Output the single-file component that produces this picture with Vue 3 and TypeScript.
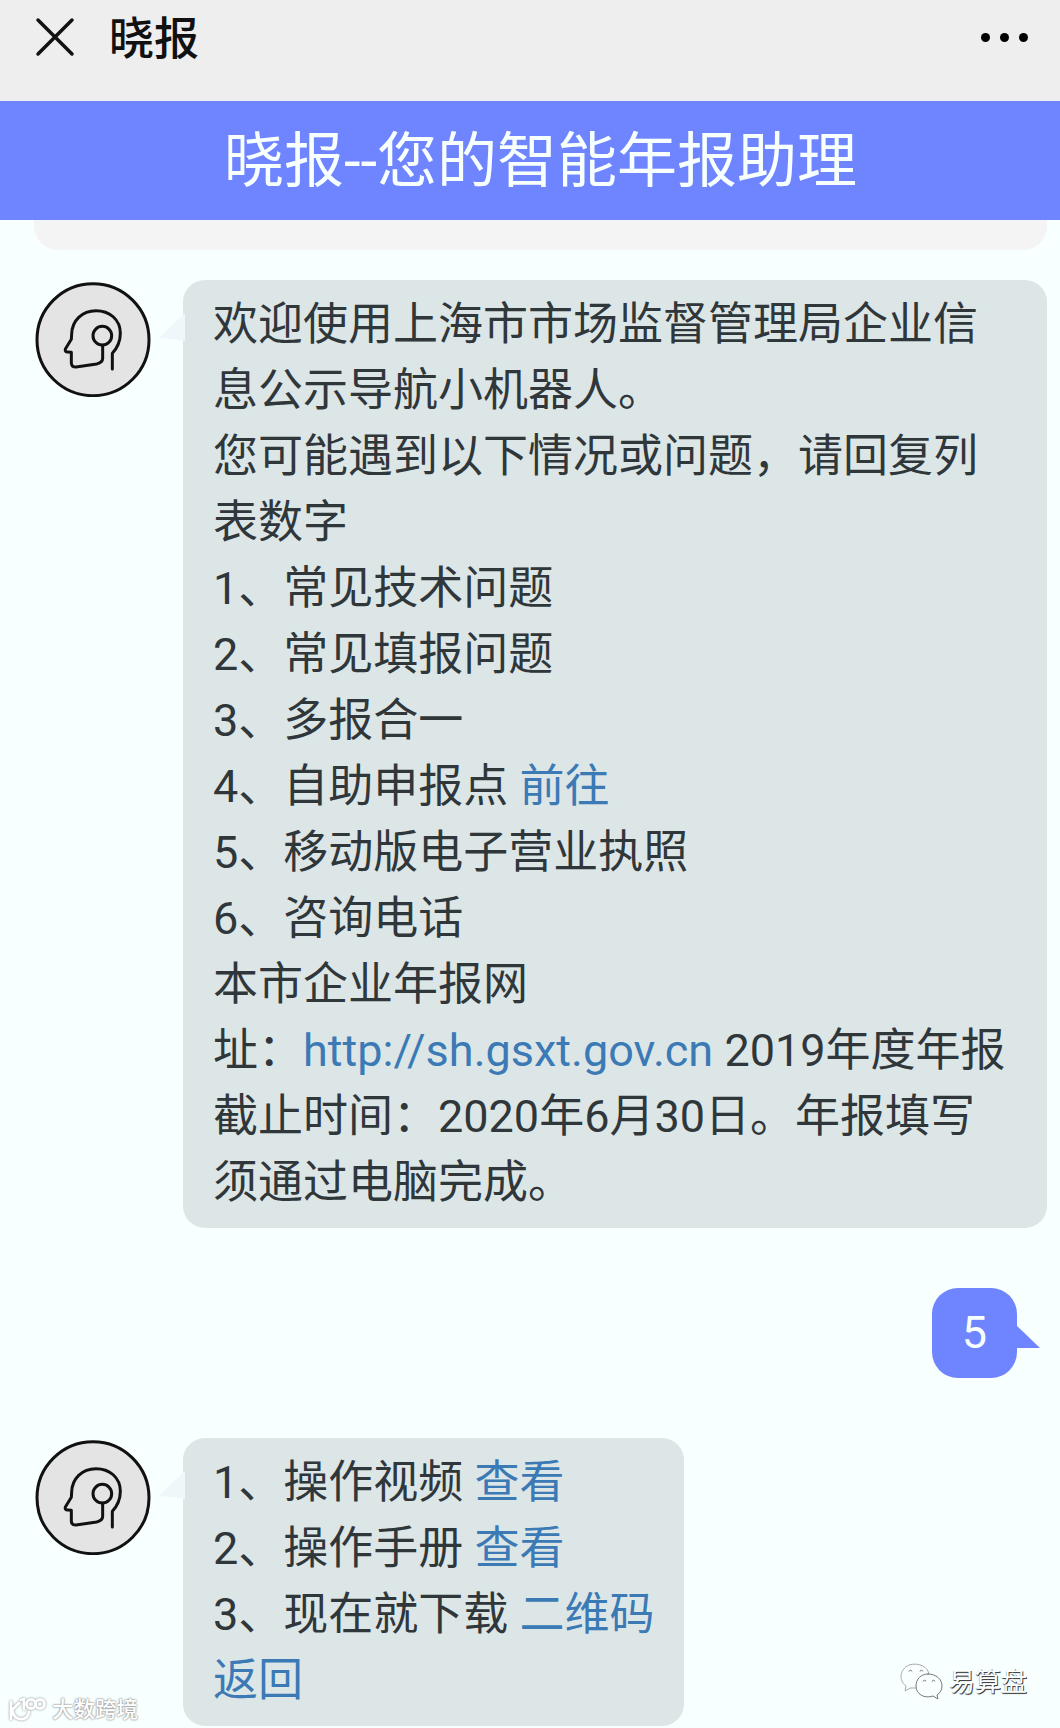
<template>
  <div class="page">
    <header class="nav-bar">
      <svg class="close" viewBox="0 0 40 40">
        <path d="M3 3L37 37M37 3L3 37" />
      </svg>
      <span class="nav-title">晓报</span>
      <div class="more"><i></i><i></i><i></i></div>
    </header>
    <h1 class="banner">晓报--您的智能年报助理</h1>
    <main class="chat">
      <div class="previous"></div>
      <div
        v-for="message in messages"
        :key="message.id"
        class="message"
        :class="[message.from, { wide: message.wide }]"
      >
        <svg v-if="message.from === 'robot'" class="avatar" viewBox="105 63 348 348">
          <circle class="ring" cx="279" cy="239" r="168" />
          <path
            d="M337 327V280C353 263 361 245 361 220C361 178 328 152 288 152C246 152 216 182 215 222L214 238L196 267Q194 276 203 276L214 277V308Q214 321 228 321L290 312Q308 308 308 295V256"
          />
          <circle cx="307" cy="227" r="28" />
        </svg>
        <div class="bubble">
          <p v-for="(line, index) in message.lines" :key="index">
            <template v-for="(part, i) in line" :key="i">
              <a v-if="part.link" href="#" @click.prevent>{{ part.text }}</a>
              <span v-else>{{ part.text }}</span>
            </template>
          </p>
        </div>
      </div>
    </main>
    <div class="mark mark-left">
      <svg viewBox="0 0 40 26">
        <path d="M3 5V22M11 6L4 13Q6 23 15 22Q20 21 21 15M13 3L16 2V12" />
        <circle cx="23" cy="7" r="4.5" />
        <circle cx="32" cy="7" r="4.5" />
      </svg>
      <span>大数跨境</span>
    </div>
    <div class="mark mark-right">
      <svg viewBox="0 0 44 38">
        <path
          class="faint"
          d="M16 25L10 25L5 28L6 23C-2 17 0 6 9 2C19 -1 28 4 29 11"
        />
        <path
          d="M28 11C36 11 42 16 42 23C42 27 40 30 37 32L38 36L33 33C24 36 16 31 16 23C16 16 21 11 28 11Z"
        />
        <path d="M9 8Q11 6 12 8M20 8Q22 6 23 8M23 18Q25 16 26 18M32 18Q34 16 35 18" />
      </svg>
      <span>易算盘</span>
    </div>
  </div>
</template>

<script setup lang="ts">
import { ref } from 'vue'

interface Part {
  text: string
  link?: boolean
}

interface Message {
  id: number
  from: 'robot' | 'user'
  wide?: boolean
  lines: Part[][]
}

// 聊天记录，每条消息按行拆分
const messages = ref<Message[]>([
  {
    id: 1,
    from: 'robot',
    wide: true,
    lines: [
      [{ text: '欢迎使用上海市市场监督管理局企业信' }],
      [{ text: '息公示导航小机器人。' }],
      [{ text: '您可能遇到以下情况或问题，请回复列' }],
      [{ text: '表数字' }],
      [{ text: '1、常见技术问题' }],
      [{ text: '2、常见填报问题' }],
      [{ text: '3、多报合一' }],
      [{ text: '4、自助申报点 ' }, { text: '前往', link: true }],
      [{ text: '5、移动版电子营业执照' }],
      [{ text: '6、咨询电话' }],
      [{ text: '本市企业年报网' }],
      [
        { text: '址：' },
        { text: 'http://sh.gsxt.gov.cn', link: true },
        { text: ' 2019年度年报' }
      ],
      [{ text: '截止时间：2020年6月30日。年报填写' }],
      [{ text: '须通过电脑完成。' }]
    ]
  },
  { id: 2, from: 'user', lines: [[{ text: '5' }]] },
  {
    id: 3,
    from: 'robot',
    lines: [
      [{ text: '1、操作视频 ' }, { text: '查看', link: true }],
      [{ text: '2、操作手册 ' }, { text: '查看', link: true }],
      [{ text: '3、现在就下载 ' }, { text: '二维码', link: true }],
      [{ text: '返回', link: true }]
    ]
  }
])
</script>

<style>
body {
  margin: 0;
  background: #f7ffff;
}
</style>

<style scoped>
.page {
  position: relative;
  width: 1060px;
  height: 1728px;
  overflow: hidden;
  background: #f7ffff;
  font-family: Roboto, 'Noto Sans CJK SC', sans-serif;
  color: #30373a;
}

.nav-bar {
  display: flex;
  align-items: center;
  box-sizing: border-box;
  height: 101px;
  padding: 0 32px 27px 35px;
  background: #eee;
}

.close {
  width: 40px;
  height: 40px;
  fill: none;
  stroke: #111;
  stroke-width: 3.5;
  stroke-linecap: round;
}

.nav-title {
  margin-left: 34px;
  padding-top: 5px;
  color: #111;
  font-size: 45px;
  font-weight: 500;
  line-height: 69px;
}

.more {
  display: flex;
  gap: 10px;
  margin-left: auto;
}

.more i {
  width: 9px;
  height: 9px;
  border-radius: 50%;
  background: #000;
}

.banner {
  height: 119px;
  margin: 0;
  padding-left: 21px;
  background: #6f84ff;
  color: #f7ffff;
  font-size: 60px;
  font-weight: 400;
  line-height: 121px;
  text-align: center;
}

.previous {
  height: 30px;
  margin: 0 13px 30px 34px;
  border-radius: 0 0 24px 24px;
  background: #f4f4f5;
}

.message {
  display: flex;
  align-items: flex-start;
  margin-bottom: 60px;
}

.robot {
  padding-left: 35px;
}

.user {
  justify-content: flex-end;
  padding-right: 43px;
}

.avatar {
  width: 116px;
  height: 116px;
  margin: 1px 32px 0 0;
  fill: none;
  stroke: #111;
  stroke-width: 9;
  stroke-linecap: round;
  stroke-linejoin: round;
}

.ring {
  fill: #e4e4e4;
}

.bubble {
  position: relative;
  padding: 12px 30px;
  border-radius: 22px;
  background: #dde6e7;
  font-size: 45px;
  line-height: 66px;
  white-space: pre;
}

.wide .bubble {
  box-sizing: border-box;
  width: 864px;
}

.bubble p {
  margin: 0;
}

.bubble a {
  color: #3b7ab5;
  text-decoration: none;
}

/* 气泡的小三角 */
.bubble::before {
  content: '';
  position: absolute;
}

.robot .bubble::before {
  top: 33px;
  left: -24px;
  width: 26px;
  height: 28px;
  background: #eef8fb;
  clip-path: polygon(100% 0, 100% 100%, 0 88%);
}

.user .bubble {
  border-radius: 26px;
  background: #6f84ff;
  color: #f7ffff;
}

.user .bubble::before {
  top: 37px;
  right: -23px;
  width: 24px;
  height: 23px;
  background: #6f84ff;
  clip-path: polygon(0 0, 100% 100%, 0 100%);
}

.mark {
  position: absolute;
  display: flex;
  align-items: center;
  white-space: nowrap;
}

.mark svg {
  fill: none;
  stroke-linecap: round;
  stroke-linejoin: round;
}

.mark-left {
  left: 8px;
  bottom: 3px;
  color: #fff;
  font-size: 21.5px;
  font-weight: 500;
  line-height: 30px;
  text-shadow: 0 0 2px #888, 0 0 2px #999;
}

.mark-left svg {
  width: 40px;
  height: 26px;
  margin-right: 4px;
  overflow: visible;
  stroke: #fff;
  stroke-width: 2.8;
  filter: drop-shadow(0 0 1px #888);
}

.mark-right {
  left: 900px;
  bottom: 27px;
  color: #fff;
  font-size: 26px;
  line-height: 36px;
  text-shadow: 1px 1px 0 #444, 0 1px 1px #555;
}

.mark-right svg {
  width: 44px;
  height: 38px;
  margin-right: 5px;
  fill: #f9ffff;
  stroke: #777;
  stroke-width: 1;
}

.mark-right .faint {
  stroke: #aaa;
}
</style>
